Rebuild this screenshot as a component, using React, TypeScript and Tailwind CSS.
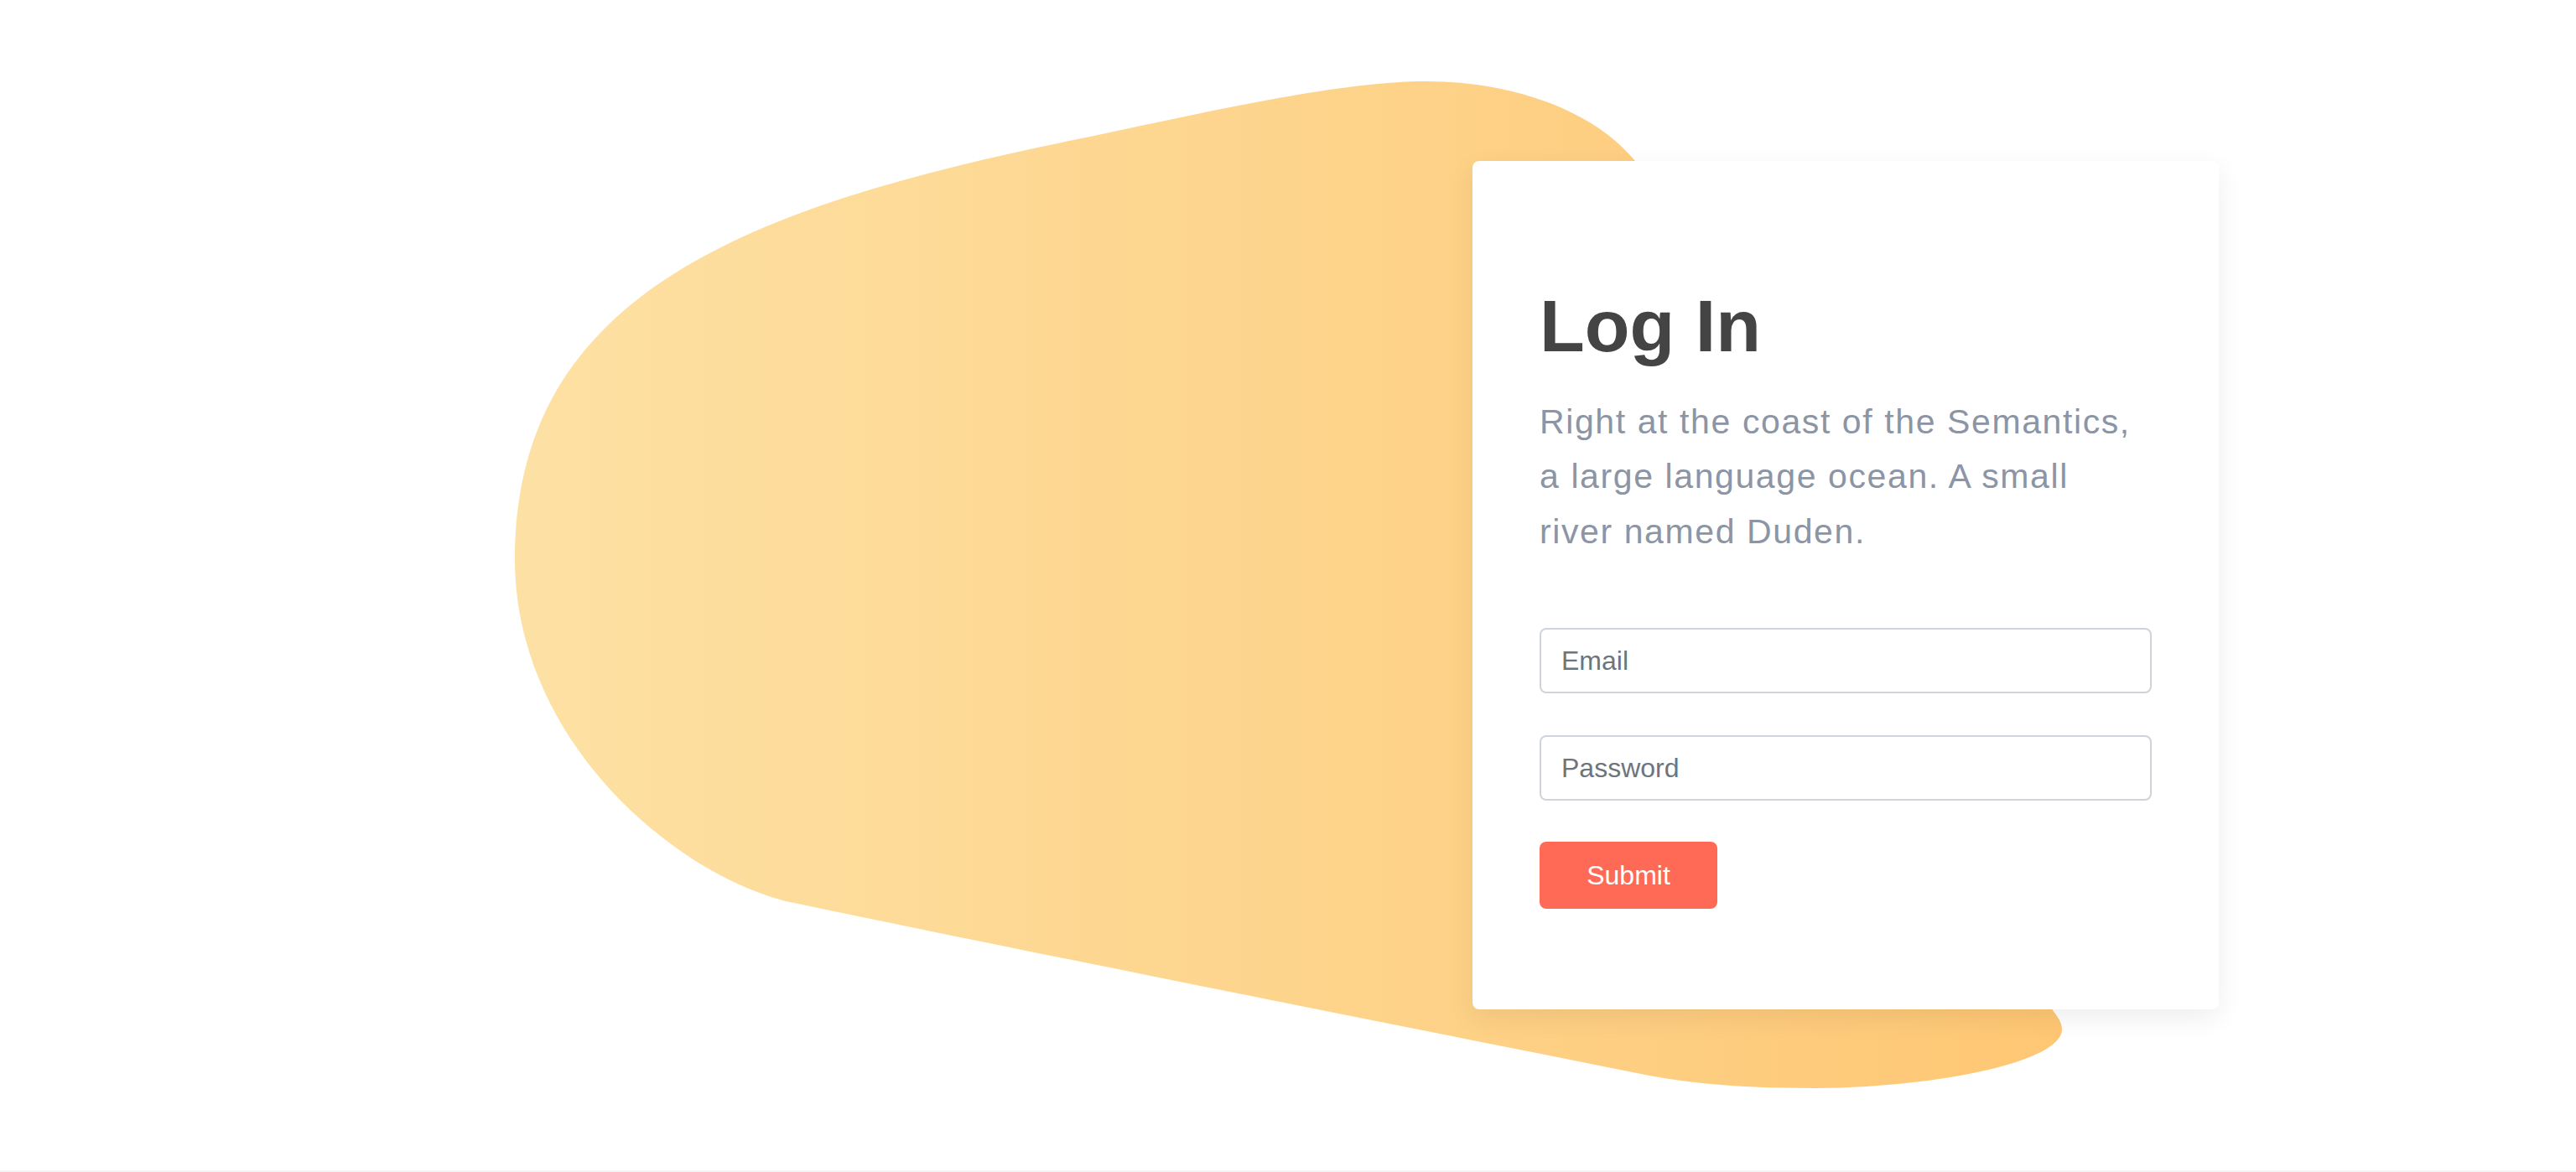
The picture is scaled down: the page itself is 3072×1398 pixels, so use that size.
import React from "react";

const Blob = () => {
  return (
    <svg
      className="pointer-events-none absolute left-0 top-0"
      width="3072"
      height="1398"
      viewBox="0 0 3072 1398"
      aria-hidden="true"
    >
      <defs>
        <linearGradient id="blobFill" gradientUnits="userSpaceOnUse" x1="614" y1="0" x2="2460" y2="0">
          <stop offset="0" stopColor="#fde1a4" />
          <stop offset="1" stopColor="#fec774" />
        </linearGradient>
      </defs>
      <path
        fill="url(#blobFill)"
        d="M 614 667
           C 614 350 890 245 1300 163
           C 1450 131 1600 97 1702 97
           C 1800 97 1900 130 1950 192
           C 2100 420 2380 1000 2440 1195
           C 2452 1210 2459 1218 2459 1228
           C 2459 1268 2300 1298 2163 1298
           C 2080 1298 2020 1293 1967 1283
           C 1600 1210 1200 1130 937 1075
           C 800 1040 614 880 614 667 Z"
      />
    </svg>
  );
};

const LoginCard = () => {
  return (
    <div className="relative flex w-[890px] flex-col rounded-[8px] bg-white px-[80px] pb-[120px] pt-[144px] shadow-[0_10px_32px_rgba(0,0,0,0.07)]">
      <h2 className="mb-[29px] text-[88px] font-bold leading-[1.2] text-[#444444]">Log In</h2>
      <p className="mb-[82px] text-[41px] leading-[65.6px] tracking-[1.6px] text-[#8b95a5]">
        Right at the coast of the Semantics,
        <br />
        a large language ocean. A small
        <br />
        river named Duden.
      </p>
      <form className="flex flex-col" onSubmit={(e) => e.preventDefault()}>
        <input
          type="text"
          placeholder="Email"
          className="mb-[50px] h-[78px] w-full rounded-[8px] border-2 border-[#ced4da] bg-white px-[24px] text-[32px] text-[#495057] outline-none placeholder:text-[#6c757d]"
        />
        <input
          type="password"
          placeholder="Password"
          className="mb-[49px] h-[78px] w-full rounded-[8px] border-2 border-[#ced4da] bg-white px-[24px] text-[32px] text-[#495057] outline-none placeholder:text-[#6c757d]"
        />
        <div>
          <button
            type="submit"
            className="h-[80px] w-[212px] rounded-[8px] bg-[#ff6a57] text-[32px] text-white"
          >
            Submit
          </button>
        </div>
      </form>
    </div>
  );
};

export default function App() {
  return (
    <div className="bg-white font-['Liberation_Sans',Arial,Helvetica,sans-serif]">
      <section className="relative h-[1396px] overflow-hidden">
        <Blob />
        <div className="relative mx-auto flex w-[2280px] justify-end px-[30px] pt-[192px]">
          <LoginCard />
        </div>
      </section>
      <div className="h-[2px] bg-[#f4f4f4]" />
    </div>
  );
}
